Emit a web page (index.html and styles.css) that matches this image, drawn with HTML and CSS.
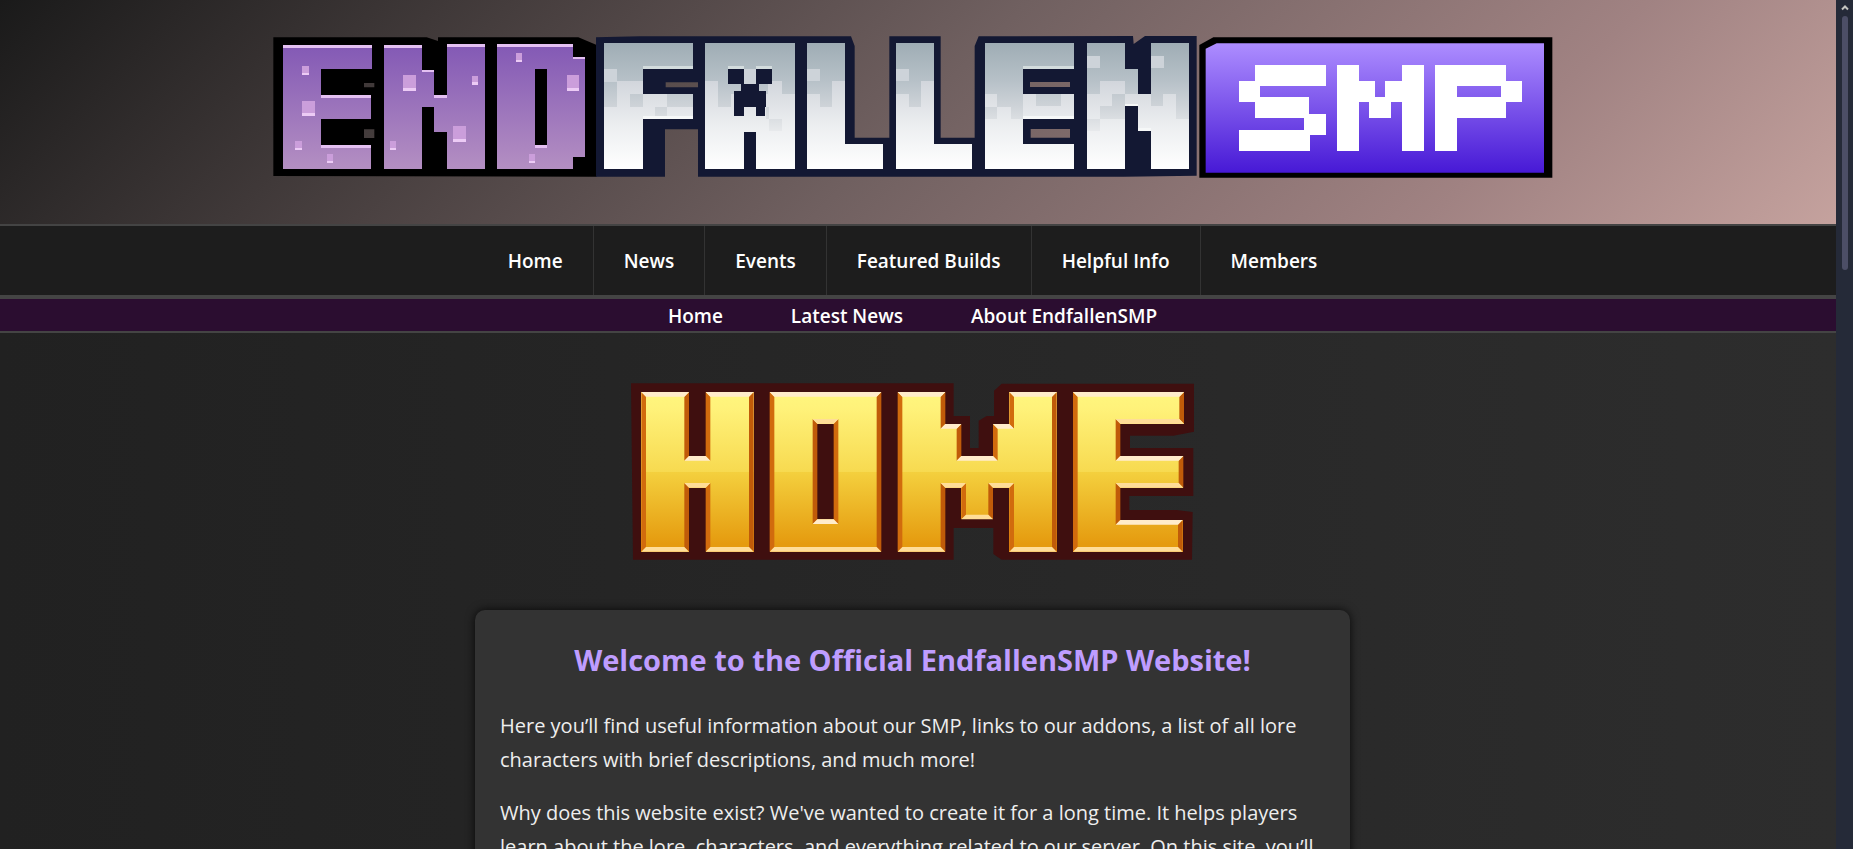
FILE: index.html
```html
<!DOCTYPE html>
<html lang="en">
<head>
<meta charset="utf-8">
<meta name="viewport" content="width=device-width, initial-scale=1">
<title>EndfallenSMP</title>
<link rel="stylesheet" href="styles.css">
</head>
<body>
<div class="page">
<header class="banner">
<svg class="banner-logo" viewBox="819 105 3840 432" role="img" aria-label="Endfallen SMP" shape-rendering="crispEdges">
<defs>
<linearGradient id="purple" gradientUnits="userSpaceOnUse" x1="0" y1="75" x2="0" y2="448"><stop offset="0" stop-color="#8359b5"/><stop offset="1" stop-color="#b48fc2"/></linearGradient>
<linearGradient id="silver" gradientUnits="userSpaceOnUse" x1="0" y1="70" x2="0" y2="448"><stop offset="0" stop-color="#9fadb5"/><stop offset=".3" stop-color="#b7c1c8"/><stop offset=".3" stop-color="#d2d6dc"/><stop offset=".65" stop-color="#eceef0"/><stop offset="1" stop-color="#fff"/></linearGradient>
<linearGradient id="steel" gradientUnits="userSpaceOnUse" x1="0" y1="70" x2="0" y2="448"><stop offset="0" stop-color="#9fadb5"/><stop offset=".3" stop-color="#b7c1c8"/><stop offset=".5" stop-color="#ced3d8"/><stop offset=".7" stop-color="#e8eaec"/></linearGradient>
<linearGradient id="violet" gradientUnits="userSpaceOnUse" x1="0" y1="70" x2="0" y2="458"><stop offset="0" stop-color="#ad8dff"/><stop offset="1" stop-color="#4719d6"/></linearGradient>
<g id="speck"><rect width="19" height="27" fill="#cb9edb"/><rect y="20" width="19" height="7" fill="#eccbf5"/></g>
<g id="block"><rect width="38" height="47" fill="#cb9edb"/><rect y="38" width="38" height="9" fill="#eccbf5"/></g>
</defs>
<g transform="translate(780 60)">
<path shape-rendering="geometricPrecision" fill="#000" fill-rule="evenodd" d="M40 52H500L534 63V52H955L1010 75V470L40 468ZM312 189V202H343V189ZM312 328V354H343V328Z"/>
<g fill="url(#purple)">
<rect x="70" y="75" width="113" height="373"/><rect x="183" y="75" width="152" height="73"/><rect x="183" y="225" width="150" height="73"/><rect x="183" y="375" width="150" height="73"/>
<rect x="372" y="75" width="113" height="373"/><rect x="485" y="150" width="38" height="110"/><rect x="523" y="225" width="38" height="110"/><rect x="560" y="75" width="114" height="373"/>
<rect x="712" y="75" width="113" height="373"/><rect x="825" y="75" width="37" height="73"/><rect x="825" y="375" width="37" height="73"/><rect x="862" y="75" width="76" height="373"/><rect x="938" y="110" width="38" height="300"/>
</g>
<g fill="#e4c0f2">
<rect x="70" y="75" width="265" height="8"/><rect x="183" y="225" width="150" height="8"/><rect x="183" y="375" width="150" height="8"/><rect x="372" y="75" width="113" height="8"/><rect x="485" y="149" width="38" height="8"/><rect x="523" y="225" width="38" height="8"/><rect x="560" y="72" width="114" height="9"/><rect x="712" y="72" width="226" height="9"/><rect x="938" y="110" width="38" height="8"/><rect x="825" y="375" width="37" height="8"/>
</g>
<use href="#speck" x="127" y="139"/><use href="#speck" x="106" y="364"/><use href="#speck" x="200" y="402"/><use href="#speck" x="635" y="167"/><use href="#speck" x="389" y="364"/><use href="#speck" x="768" y="100"/><use href="#speck" x="806" y="402"/>
<use href="#block" x="127" y="242"/><use href="#block" x="429" y="166"/><use href="#block" x="579" y="318"/><use href="#block" x="920" y="166"/>
</g>
<g transform="translate(1770 60)">
<path shape-rendering="geometricPrecision" fill="#131833" fill-rule="evenodd" d="M18 52L150 49H783L794 78V353H898V49H1052V353H1154V78L1166 49L1629 48L1631 72L1665 48H1820V467L1600 470H324V328H225V470H18ZM227 187V202H324V187ZM1320 186V201H1440V186ZM1322 327V353H1440V327Z"/>
<g fill="url(#silver)">
<rect x="43" y="70" width="115" height="378"/><rect x="158" y="70" width="151" height="76"/><rect x="158" y="222" width="151" height="75"/>
<rect x="346" y="70" width="268" height="378"/>
<rect x="650" y="70" width="115" height="378"/><rect x="765" y="373" width="114" height="75"/>
<rect x="917" y="70" width="116" height="378"/><rect x="1033" y="373" width="114" height="75"/>
<rect x="1185" y="70" width="115" height="378"/><rect x="1300" y="70" width="152" height="76"/><rect x="1300" y="222" width="152" height="75"/><rect x="1300" y="373" width="152" height="75"/>
<rect x="1490" y="70" width="116" height="378"/><rect x="1606" y="146" width="38" height="113"/><rect x="1644" y="222" width="38" height="111"/><rect x="1682" y="70" width="116" height="378"/>
</g>
<g fill="url(#steel)">
<rect x="43" y="183" width="37" height="77"/><rect x="120" y="222" width="38" height="38"/><rect x="195" y="260" width="37" height="30"/><rect x="232" y="222" width="77" height="38"/>
<rect x="384" y="183" width="151" height="39"/><rect x="384" y="222" width="38" height="38"/><rect x="575" y="183" width="39" height="39"/><rect x="527" y="260" width="9" height="37"/><rect x="537" y="297" width="38" height="36"/>
<rect x="650" y="183" width="77" height="39"/><rect x="690" y="222" width="37" height="38"/>
<rect x="917" y="183" width="77" height="39"/><rect x="957" y="222" width="37" height="38"/>
<rect x="1185" y="183" width="115" height="39"/><rect x="1222" y="222" width="78" height="38"/><rect x="1185" y="260" width="37" height="37"/><rect x="1262" y="260" width="38" height="37"/><rect x="1338" y="222" width="76" height="37"/>
<rect x="1490" y="183" width="40" height="39"/><rect x="1606" y="183" width="38" height="39"/><rect x="1682" y="183" width="116" height="39"/><rect x="1567" y="222" width="39" height="37"/><rect x="1682" y="222" width="38" height="37"/><rect x="1530" y="259" width="76" height="38"/><rect x="1758" y="222" width="40" height="75"/><rect x="1490" y="297" width="40" height="37"/>
</g>
<g fill="#cdd3d9">
<rect x="43" y="146" width="37" height="39"/><rect x="650" y="146" width="40" height="38"/><rect x="917" y="146" width="39" height="38"/><rect x="1490" y="108" width="40" height="37"/><rect x="1682" y="108" width="40" height="37"/><rect x="461" y="146" width="37" height="46"/>
</g>
<g fill="#d3dcdd"><rect x="158" y="138" width="151" height="8"/><rect x="1300" y="138" width="152" height="8"/><rect x="414" y="138" width="47" height="8"/><rect x="498" y="138" width="47" height="8"/></g>
<g fill="#f6f8f8"><rect x="158" y="289" width="151" height="8"/><rect x="1300" y="289" width="152" height="8"/><rect x="1606" y="251" width="38" height="8"/><rect x="1644" y="325" width="38" height="8"/></g>
<g fill="#131833">
<rect x="414" y="146" width="47" height="47"/><rect x="498" y="146" width="47" height="47"/><rect x="453" y="192" width="54" height="24"/><rect x="433" y="213" width="94" height="47"/><rect x="433" y="259" width="28" height="28"/><rect x="498" y="259" width="28" height="28"/><rect x="461" y="335" width="37" height="115"/>
</g>
</g>
<g transform="translate(3570 60)">
<path shape-rendering="geometricPrecision" fill="#000" d="M28 75L70 52H1087V473H28Z"/>
<path shape-rendering="geometricPrecision" fill="url(#violet)" d="M47 86L80 70H1062V458H47Z"/>
<g fill="#fff">
<rect x="195" y="135" width="212" height="63"/><rect x="146" y="183" width="65" height="63"/><rect x="195" y="232" width="163" height="63"/><rect x="343" y="281" width="65" height="63"/><rect x="146" y="329" width="213" height="63"/>
<rect x="440" y="135" width="66" height="257"/><rect x="506" y="183" width="49" height="63"/><rect x="538" y="232" width="65" height="63"/><rect x="586" y="183" width="50" height="63"/><rect x="636" y="135" width="66" height="257"/>
<rect x="735" y="135" width="65" height="257"/><rect x="800" y="135" width="147" height="63"/><rect x="800" y="232" width="147" height="63"/><rect x="932" y="183" width="65" height="63"/>
</g>
</g>
</svg>
</header>
<nav class="main-nav" aria-label="Main">
<a href="#home">Home</a><a href="#news">News</a><a href="#events">Events</a><a href="#builds">Featured Builds</a><a href="#info">Helpful Info</a><a href="#members">Members</a>
</nav>
<nav class="sub-nav" aria-label="On this page">
<a href="#home">Home</a><a href="#latest">Latest News</a><a href="#about">About EndfallenSMP</a>
</nav>
<main class="content" id="home">
<svg class="title-logo" viewBox="33 39 1689 531" role="img" aria-label="Home">
<defs>
<linearGradient id="gold" gradientUnits="userSpaceOnUse" x1="0" y1="66" x2="0" y2="545"><stop offset="0" stop-color="#fff67e"/><stop offset=".1" stop-color="#fff27a"/><stop offset=".5" stop-color="#f7da50"/><stop offset=".5" stop-color="#f4d03e"/><stop offset=".95" stop-color="#e59b0f"/></linearGradient>
</defs>
<path fill="#3f0f0f" d="M33 40H1001V138H1050V234H1076V152L1100 138H1122V62L1145 41H1722V185L1660 197H1530V234H1720V378H1528V420H1670L1718 426L1716 569H1145L1120 552V474H1001V569H39Z"/>
<g fill="url(#gold)" shape-rendering="crispEdges">
<rect x="64" y="66" width="143" height="479"/><rect x="200" y="258" width="64" height="95"/><rect x="257" y="66" width="144" height="479"/>
<rect x="449" y="66" width="143" height="479"/><rect x="641" y="66" width="143" height="479"/><rect x="590" y="66" width="53" height="95"/><rect x="590" y="448" width="53" height="97"/>
<rect x="833" y="66" width="143" height="479"/><rect x="974" y="162" width="50" height="191"/><rect x="1024" y="258" width="95" height="190"/><rect x="1119" y="162" width="51" height="191"/><rect x="1168" y="66" width="142" height="479"/>
<rect x="1359" y="66" width="142" height="479"/><rect x="1500" y="66" width="192" height="95"/><rect x="1500" y="258" width="190" height="95"/><rect x="1500" y="450" width="188" height="95"/>
</g>
<path fill="#d16b0d" d="M64 66L78 80V531L64 545ZM257 66V258L271 272V80ZM257 545V353L271 339V531ZM449 66L463 80V531L449 545ZM641 161V448L655 462V147Z"/>
<path fill="#c05b09" d="M207 66V258L193 272V80ZM207 545V353L193 339V531ZM401 66V545L387 531V80ZM784 66V545L770 531V80ZM592 161V448L578 462V147Z"/>
<path fill="#ffeccb" d="M64 66H207L193 80H78ZM257 66H401L387 80H271ZM207 258H257L271 272H193ZM449 66H784L770 80H463ZM592 448H641L655 462H578Z"/>
<path fill="#ffdd98" d="M64 545H207L193 531H78ZM257 545H401L387 531H271ZM207 353H257L271 339H193ZM449 545H784L770 531H463ZM592 161H641L655 147H578Z"/>
<g transform="translate(810 0)">
<path fill="#d16b0d" d="M23 66L37 80V531L23 545ZM309 162V258L323 272V176ZM358 66V162L372 176V80ZM214 448V353L228 339V434ZM358 545V353L372 339V531ZM549 66L563 80V531L549 545Z"/>
<path fill="#c05b09" d="M166 66V162L152 176V80ZM214 162V258L200 272V176ZM500 66V545L486 531V80ZM166 545V353L152 339V531ZM309 448V353L295 339V434ZM882 66V161L868 147V80ZM691 161V258L677 272V147ZM880 258V353L866 339V272ZM691 353V450L677 464V339ZM878 450V545L864 531V464Z"/>
<path fill="#ffeccb" d="M23 66H166L152 80H37ZM358 66H500L486 80H372ZM166 162H214L200 176H152ZM214 258H309L323 272H200ZM309 162H358L372 176H323ZM549 66H882L868 80H563ZM691 258H880L866 272H677ZM691 450H878L864 464H677Z"/>
<path fill="#ffdd98" d="M166 353H214L228 339H152ZM214 448H309L295 434H228ZM309 353H358L372 339H295ZM23 545H166L152 531H37ZM358 545H500L486 531H372ZM691 161H882L868 147H677ZM691 353H880L866 339H677ZM549 545H878L864 531H563Z"/>
</g>
</svg>
<section class="card">
<h1>Welcome to the Official EndfallenSMP Website!</h1>
<p>Here you’ll find useful information about our SMP, links to our addons, a list of all lore characters with brief descriptions, and much more!</p>
<p>Why does this website exist? We've wanted to create it for a long time. It helps players learn about the lore, characters, and everything related to our server. On this site, you’ll</p>
</section>
</main>
</div>
<div class="scrollbar" aria-hidden="true">
<svg class="scroll-arrow" viewBox="0 0 8 7"><path d="M1 5.500L4 2.500L7 5.500" fill="none" stroke="#c4c4c0" stroke-width="2"/></svg>
<div class="scroll-thumb"></div>
</div>
</body>
</html>
```
FILE: styles.css
```css
* {
  box-sizing: border-box;
}

body {
  margin: 0;
  height: 100vh;
  display: flex;
  overflow: hidden;
  background: #252a38;
  color: #eee;
  font-family: "Segoe UI", "Open Sans", "Noto Sans", sans-serif;
}

.page {
  flex: 1;
  min-width: 0;
  overflow-y: auto;
  scrollbar-width: none;
  background: linear-gradient(90deg, #212121, #2d2d2d);
}

.banner,
.main-nav,
.sub-nav,
.content {
  padding-right: 11px;
}

.banner {
  display: flex;
  justify-content: center;
  padding-top: 35px;
  padding-bottom: 45px;
  background: linear-gradient(135deg, #1a1a1a, #706060 50%, #a08282 80%, #c5a29e);
}

.banner-logo {
  display: block;
  width: 1280px;
  max-width: 100%;
}

.main-nav,
.sub-nav {
  display: flex;
  justify-content: center;
  font-size: 19px;
  font-weight: 600;
}

.main-nav {
  background: #1d1d1d;
  border-top: 2px solid #444;
  border-bottom: 2px solid #444;
}

.main-nav a,
.sub-nav a {
  color: #fff;
  text-decoration: none;
}

.main-nav a {
  padding: 21px 30px 19px;
  line-height: 29px;
  border-right: 1px solid #333;
}

.main-nav a:last-child {
  border-right: 0;
}

.sub-nav {
  gap: 68px;
  padding-top: 2px;
  line-height: 30px;
  background: #2b0d30;
  border-top: 2px solid #444;
  border-bottom: 2px solid #444;
}

.content {
  display: flex;
  flex-direction: column;
  align-items: center;
  gap: 50px;
  padding-top: 50px;
}

.title-logo {
  display: block;
  width: 563px;
  max-width: 100%;
}

.card {
  width: 875px;
  max-width: 100%;
  padding: 25px;
  background: #333;
  border-radius: 10px;
  box-shadow: 0 0 10px rgba(0, 0, 0, 0.8);
}

.card h1 {
  margin: 0 0 24px;
  color: #bf9dff;
  font-size: 29px;
  line-height: 50px;
  text-align: center;
}

.card p {
  margin: 0 0 19px;
  font-size: 20px;
  line-height: 34px;
}

.scrollbar {
  display: flex;
  flex-direction: column;
  align-items: center;
  gap: 5px;
  width: 17px;
  padding-top: 4px;
  padding-left: 1px;
}

.scroll-arrow {
  width: 8px;
  height: 7px;
}

.scroll-thumb {
  width: 6px;
  height: 30%;
  border-radius: 3px;
  background: #4c4e66;
}
```
